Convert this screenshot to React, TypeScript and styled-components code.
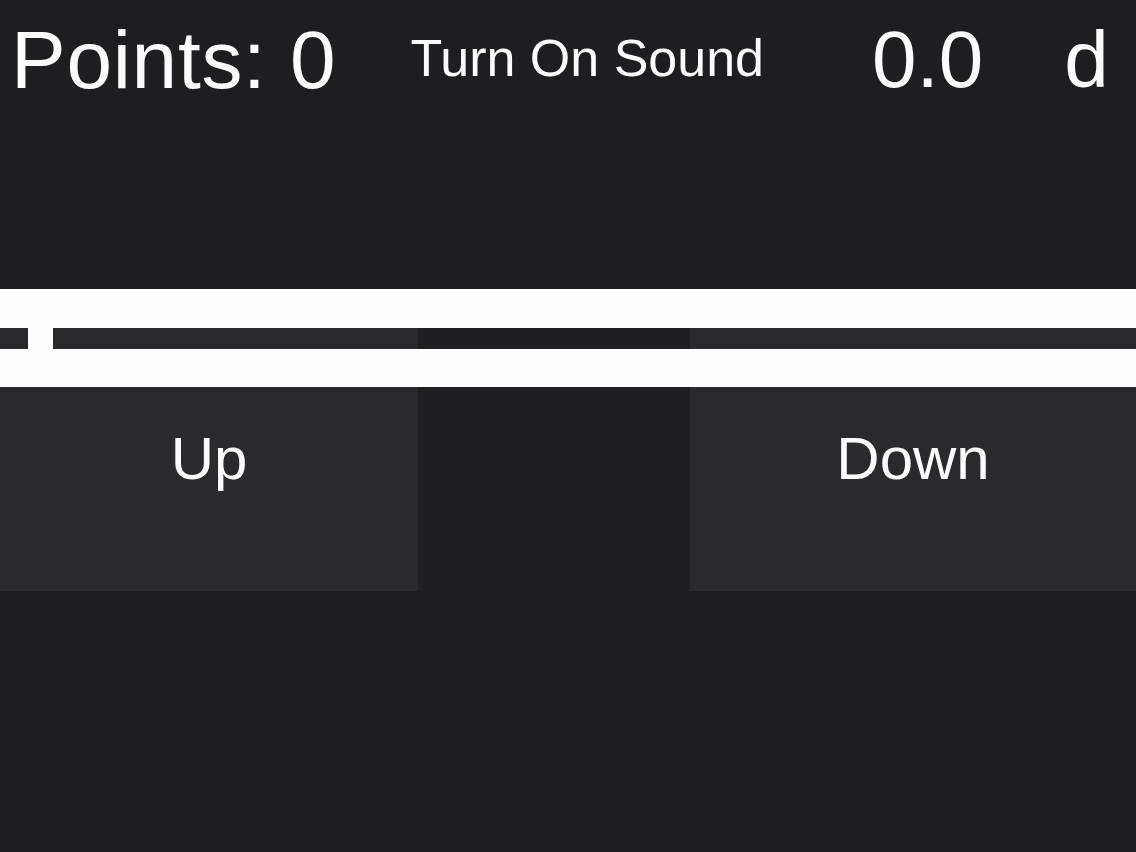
import React from "react";
import styled, { createGlobalStyle } from "styled-components";

const Global = createGlobalStyle`
  html, body {
    margin: 0;
    padding: 0;
    background: #1e1d20;
  }
  body {
    font-family: "Liberation Sans", Arial, Helvetica, sans-serif;
    color: #fbfbfb;
  }
`;

const Page = styled.div`
  width: 1136px;
  height: 852px;
  background: #1e1d20;
  overflow: hidden;
`;

const Header = styled.header`
  display: flex;
  align-items: center;
  height: 120px;
  padding-left: 11px;
`;

const Stat = styled.div<{ $size: number; $offset: number; $spacing?: number }>`
  font-size: ${(p) => p.$size}px;
  line-height: 1;
  letter-spacing: ${(p) => p.$spacing ?? 0}px;
  margin-left: ${(p) => p.$offset}px;
  white-space: nowrap;
  color: #fbfbfb;
`;

const SoundButton = styled.button`
  font-family: inherit;
  font-size: 52px;
  line-height: 1;
  margin: 0 0 4px 74px;
  padding: 0;
  border: none;
  background: transparent;
  color: #fbfbfb;
  white-space: nowrap;
  cursor: pointer;
`;

const Field = styled.section`
  position: relative;
  margin-top: 208px;
`;

const Controls = styled.div`
  display: grid;
  grid-template-columns: 418px 272px 1fr;
  height: 263px;
`;

const ControlButton = styled.button`
  display: flex;
  align-items: center;
  justify-content: center;
  padding: 0 0 2px 0;
  border: none;
  background: #2a292c;
  color: #fbfbfb;
  font-family: inherit;
  font-size: 60px;
  line-height: 1;
  cursor: pointer;
`;

const Gap = styled.div`
  background: #1f1e21;
`;

const Track = styled.div`
  position: absolute;
  top: -39px;
  left: 0;
  right: 0;
  display: flex;
  flex-direction: column;
  pointer-events: none;
`;

const Band = styled.div<{ $h: number }>`
  height: ${(p) => p.$h}px;
  background: #fdfdfd;
`;

const Lane = styled.div`
  position: relative;
  height: 21px;
`;

const Marker = styled.div`
  position: absolute;
  top: 0;
  bottom: 0;
  width: 25px;
  background: #fdfdfd;
`;

export default function App() {
  const markerX = 28;
  return (
    <Page>
      <Global />
      <Header>
        <Stat $size={82} $offset={0} $spacing={0.7}>Points: 0</Stat>
        <SoundButton>Turn On Sound</SoundButton>
        <Stat $size={80} $offset={108}>0.0</Stat>
        <Stat $size={80} $offset={81}>d</Stat>
      </Header>
      <Field>
        <Controls>
          <ControlButton>Up</ControlButton>
          <Gap />
          <ControlButton>Down</ControlButton>
        </Controls>
        <Track>
          <Band $h={39} />
          <Lane>
            <Marker style={{ left: markerX }} />
          </Lane>
          <Band $h={38} />
        </Track>
      </Field>
    </Page>
  );
}
